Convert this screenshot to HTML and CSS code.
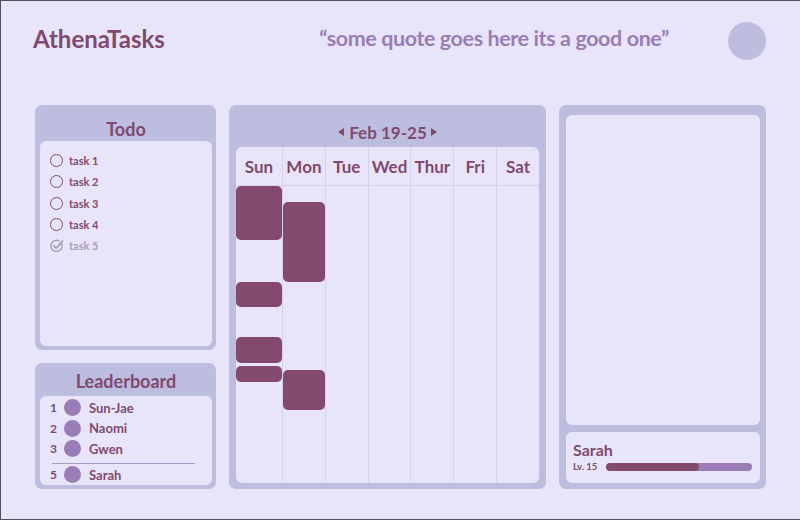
FILE: index.html
```html
<!DOCTYPE html>
<html>
<head>
<meta charset="utf-8">
<link rel="stylesheet" href="styles.css">
</head>
<body>
<div class="frame">
  <header class="top">
    <div class="brand">AthenaTasks</div>
    <div class="quote">“some quote goes here its a good one”</div>
    <div class="avatar"></div>
  </header>
  <main class="grid">
    <div class="leftcol">
      <section class="panel todo">
        <h2 class="ptitle">Todo</h2>
        <div class="inner todo-list">
          <div class="task"><span class="ring"></span>task 1</div>
          <div class="task"><span class="ring"></span>task 2</div>
          <div class="task"><span class="ring"></span>task 3</div>
          <div class="task"><span class="ring"></span>task 4</div>
          <div class="task done">
            <svg class="check" width="14" height="14" viewBox="0 0 14 14"><path d="M11.6 4.6 A5.6 5.6 0 1 1 9.2 2.0" fill="none" stroke="#a8a0b4" stroke-width="1.4" stroke-linecap="round"/><path d="M3.8 6.8 L6.3 9.2 L12.6 2.2" fill="none" stroke="#a8a0b4" stroke-width="1.8" stroke-linecap="round" stroke-linejoin="round"/></svg>task 5</div>
        </div>
      </section>
      <section class="panel board">
        <h2 class="ptitle small">Leaderboard</h2>
        <div class="inner board-list">
          <div class="brow"><span class="rank">1</span><span class="dot"></span><span class="name">Sun-Jae</span></div>
          <div class="brow"><span class="rank">2</span><span class="dot"></span><span class="name">Naomi</span></div>
          <div class="brow"><span class="rank">3</span><span class="dot"></span><span class="name">Gwen</span></div>
          <div class="divider"></div>
          <div class="brow"><span class="rank">5</span><span class="dot"></span><span class="name">Sarah</span></div>
        </div>
      </section>
    </div>
    <section class="panel cal">
      <div class="calhead"><span class="tri left"></span>Feb 19-25<span class="tri right"></span></div>
      <div class="inner week">
        <div class="day"><div class="dname">Sun</div><div class="dbody">
          <div class="ev" style="top:0;height:54px"></div>
          <div class="ev" style="top:96px;height:25px"></div>
          <div class="ev" style="top:151px;height:26px"></div>
          <div class="ev" style="top:180px;height:16px"></div>
        </div></div>
        <div class="day"><div class="dname">Mon</div><div class="dbody">
          <div class="ev" style="top:16px;height:80px"></div>
          <div class="ev" style="top:184px;height:40px"></div>
        </div></div>
        <div class="day"><div class="dname">Tue</div><div class="dbody"></div></div>
        <div class="day"><div class="dname">Wed</div><div class="dbody"></div></div>
        <div class="day"><div class="dname">Thur</div><div class="dbody"></div></div>
        <div class="day"><div class="dname">Fri</div><div class="dbody"></div></div>
        <div class="day"><div class="dname">Sat</div><div class="dbody"></div></div>
      </div>
    </section>
    <section class="panel side">
      <div class="inner blank"></div>
      <div class="inner profile">
        <div class="pname">Sarah</div>
        <div class="lvrow"><span class="lv">Lv. 15</span><div class="bar"><div class="fill" style="width:64%"></div></div></div>
      </div>
    </section>
  </main>
</div>
</body>
</html>
```
FILE: styles.css
```css
* { box-sizing: border-box; }
html, body { margin: 0; padding: 0; }
body {
  font-family: Lato, "Noto Sans", sans-serif;
  color: #7f4a6e;
  background: #e8e5fa;
}
.frame {
  width: 800px;
  height: 520px;
  background: #e8e5fa;
  border-top: 1px solid #4f4d55;
  border-left: 1px solid #4f4d55;
  border-bottom: 1px solid #4f4d55;
  padding: 0 34px 0 34px;
  display: flex;
  flex-direction: column;
}
.top {
  height: 104px;
  display: flex;
  align-items: flex-start;
  padding-top: 20px;
}
.brand {
  font-size: 24px;
  line-height: 36px;
  font-weight: 700;
  color: #7f4a6e;
  margin-left: -2px;
}
.quote {
  flex: 1;
  text-align: right;
  margin-right: 59px;
  font-size: 21.5px;
  letter-spacing: -0.4px;
  line-height: 34px;
  font-weight: 700;
  color: #9a7db5;
}
.avatar {
  width: 38px;
  height: 38px;
  border-radius: 50%;
  background: #bebde0;
  margin-top: 1px;
}
.grid {
  display: grid;
  grid-template-columns: 181px 317px 207px;
  column-gap: 13px;
  height: 384px;
}
.leftcol {
  display: flex;
  flex-direction: column;
  gap: 13px;
}
.panel {
  background: #bdbde0;
  border-radius: 7px;
}
.inner {
  background: #e8e5fa;
  border-radius: 6px;
}
.ptitle {
  margin: 0;
  text-align: center;
  font-weight: 700;
  font-size: 18px;
  color: #7f4a6e;
}
.todo {
  height: 245px;
  padding: 0 4px 4px 5px;
  display: flex;
  flex-direction: column;
}
.todo .ptitle {
  padding-top: 13px;
  line-height: 22px;
  height: 36px;
}
.todo-list {
  flex: 1;
  padding: 9px 0 0 10px;
}
.task {
  height: 21.3px;
  display: flex;
  align-items: center;
  font-size: 11px;
  font-weight: 700;
  color: #7f4a6e;
}
.ring {
  width: 13px;
  height: 13px;
  border-radius: 50%;
  border: 1.5px solid #7f4a6e;
  margin-right: 6px;
  flex: none;
}
.task.done { color: #a8a0b4; }
.check { margin-right: 5px; flex: none; }
.board {
  height: 126px;
  padding: 0 4px 4px 5px;
  display: flex;
  flex-direction: column;
}
.board .ptitle {
  padding-top: 8px;
  line-height: 20px;
  height: 33px;
}
.board-list {
  flex: 1;
  padding: 2px 0 0 10px;
}
.brow {
  height: 20.3px;
  display: flex;
  align-items: center;
  font-size: 13px;
  font-weight: 700;
}
.rank { width: 14px; font-size: 12px; }
.dot {
  width: 17px;
  height: 17px;
  border-radius: 50%;
  background: #9a7db5;
  margin-right: 8px;
}
.divider {
  height: 1px;
  background: #a99ac8;
  margin: 4px 17px 1px 2px;
}
.cal {
  padding: 0 7px 6px 7px;
  display: flex;
  flex-direction: column;
}
.calhead {
  height: 42px;
  display: flex;
  align-items: center;
  justify-content: center;
  padding-top: 12px;
  font-size: 17px;
  font-weight: 700;
  color: #7f4a6e;
}
.tri {
  width: 0;
  height: 0;
  border-top: 4.5px solid transparent;
  border-bottom: 4.5px solid transparent;
}
.tri.left { border-right: 6px solid #7f4a6e; margin-right: 5px; }
.tri.right { border-left: 6px solid #7f4a6e; margin-left: 4px; }
.week {
  flex: 1;
  display: grid;
  grid-template-columns: 46px repeat(6, 1fr);
  overflow: hidden;
}
.day {
  display: flex;
  flex-direction: column;
  border-left: 1px solid #d5d1ee;
}
.day:first-child { border-left: none; }
.dname {
  height: 39px;
  border-bottom: 1px solid #d5d1ee;
  display: flex;
  align-items: center;
  justify-content: center;
  font-size: 17px;
  font-weight: 700;
  color: #7f4a6e;
  white-space: nowrap;
}
.dbody {
  flex: 1;
  position: relative;
}
.ev {
  position: absolute;
  left: 0;
  right: 0;
  background: #834a6e;
  border-radius: 5px;
}
.side {
  padding: 10px 6px 6px 7px;
  display: flex;
  flex-direction: column;
  gap: 7px;
}
.blank { flex: 1; }
.profile {
  height: 51px;
  padding: 8px 8px 0 7px;
}
.pname {
  font-size: 16px;
  line-height: 20px;
  font-weight: 700;
  color: #7f4a6e;
}
.lvrow {
  display: flex;
  align-items: center;
  margin-top: 1px;
}
.lv {
  font-size: 9.5px;
  font-weight: 700;
  width: 33px;
  color: #7f4a6e;
}
.bar {
  flex: 1;
  height: 8px;
  border-radius: 4px;
  background: #9a7db5;
  overflow: hidden;
}
.fill {
  height: 100%;
  background: #834a6e;
  border-radius: 4px;
}
```
